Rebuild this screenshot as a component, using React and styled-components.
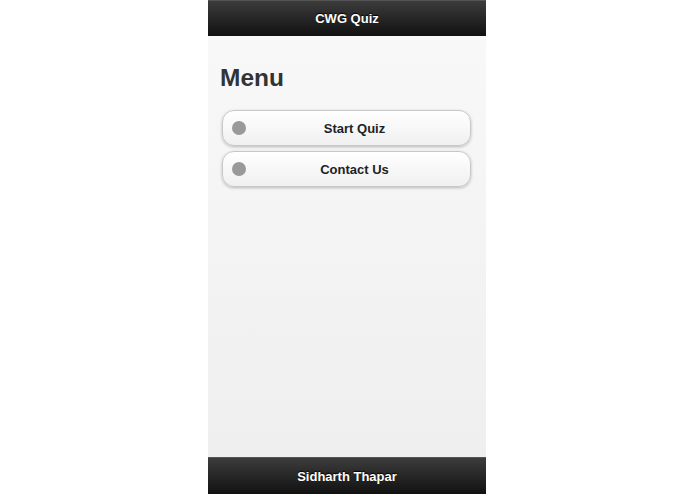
import styled, { createGlobalStyle } from "styled-components";

const Global = createGlobalStyle`
  body {
    margin: 0;
    background: #fff;
    font-family: "Liberation Sans", Arial, sans-serif;
  }
`;

const Phone = styled.div`
  width: 278px;
  height: 494px;
  margin-left: calc(50% - 139.5px);
  display: flex;
  flex-direction: column;
  background: linear-gradient(#f9f9f9, #eeeeee);
`;

const Bar = styled.div`
  height: ${({ $h }) => $h}px;
  flex: none;
  display: flex;
  align-items: center;
  justify-content: center;
  background: linear-gradient(#3c3c3c, #111);
  border-top: 1px solid #555;
  color: #fff;
  font-weight: bold;
  font-size: 13px;
  text-shadow: 0 -1px 1px #000;
`;

const Content = styled.div`
  flex: 1;
  padding: 28px 15px 0 12px;
  display: flex;
  flex-direction: column;
`;

const Heading = styled.h1`
  margin: 0 0 18px;
  font-size: 24.5px;
  font-weight: bold;
  color: #333;
`;

const List = styled.div`
  display: flex;
  flex-direction: column;
  gap: 5px;
  padding-left: 2px;
`;

const Button = styled.div`
  position: relative;
  height: 34px;
  padding-left: 16px;
  border: 1px solid #c8c8c8;
  border-radius: 12px;
  background: linear-gradient(#ffffff, #f0f0f0);
  box-shadow: 0 1px 3px rgba(0, 0, 0, 0.25), inset 0 1px 0 #fff;
  display: flex;
  align-items: center;
  justify-content: center;
  font-size: 13px;
  font-weight: bold;
  color: #222;
`;

const Dot = styled.span`
  position: absolute;
  left: 9px;
  top: 50%;
  width: 14px;
  height: 14px;
  margin-top: -7px;
  border-radius: 50%;
  background: #999;
`;

const items = ["Start Quiz", "Contact Us"];

export default function App() {
  return (
    <>
      <Global />
      <Phone>
        <Bar $h={35}>CWG Quiz</Bar>
        <Content>
          <Heading>Menu</Heading>
          <List>
            {items.map((t) => (
              <Button key={t}>
                <Dot />
                {t}
              </Button>
            ))}
          </List>
        </Content>
        <Bar $h={36}>Sidharth Thapar</Bar>
      </Phone>
    </>
  );
}
